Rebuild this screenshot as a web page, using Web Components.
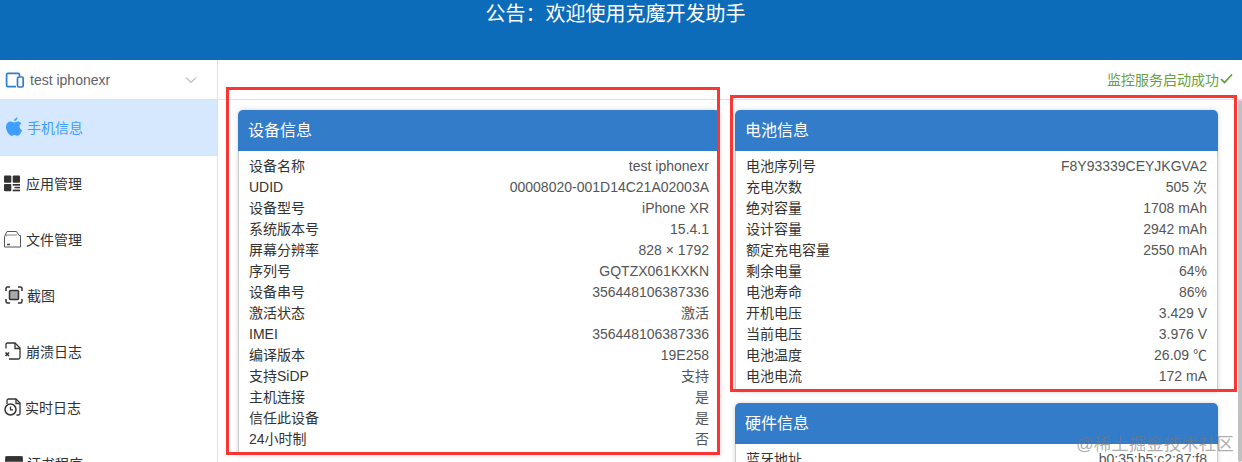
<!DOCTYPE html>
<html><head><meta charset="utf-8">
<style>
html,body{margin:0;padding:0;height:462px;overflow:hidden;background:#fff}
body{font:14px "Liberation Sans","Noto Sans CJK SC",sans-serif;color:#303133}
</style></head><body>
<app-shell></app-shell>
<script>
const icons={
 device:'<svg width="20" height="20" viewBox="0 0 20 20" fill="none" stroke="#2f7cc7" stroke-width="1.7"><path d="M14.500 6.500V4.800c0-.9-.6-1.400-1.400-1.400H3c-.9 0-1.400.6-1.400 1.400v10.400c0 .9.600 1.400 1.400 1.400h8"/><rect x="12.500" y="7" width="5.700" height="10" rx="1.300"/></svg>',
 apple:'<svg width="18" height="20" viewBox="0 0 18 20" fill="#409eff"><path d="M12.600 .500c.1 1.400-1.500 3.600-3.500 3.500C8.900 2.300 10.800 .600 12.600 .500zM9.100 5.500c1 0 2-.9 3.600-.9 1.200 0 2.700.6 3.600 2-2.700 1.600-2.200 5.500.7 6.600-.8 2.300-2.500 5.500-4.300 5.500-1.200 0-1.700-.8-3.200-.8s-2.100.8-3.200.8C4.500 18.700 1 13.900 1 10.100c0-3.400 2.300-5.500 4.500-5.500 1.500 0 2.700.9 3.600.9z"/></svg>',
 apps:'<svg width="18" height="18" viewBox="0 0 18 18" fill="#333"><rect x="1" y="1.500" width="7.300" height="7.300" rx="1"/><rect x="9.700" y="1.500" width="7.300" height="7.300" rx="1"/><rect x="1" y="10" width="7.300" height="7.300" rx="1"/><rect x="9.700" y="10" width="7.300" height="1.700"/><rect x="11.500" y="12.800" width="5.500" height="1.500"/><rect x="9.700" y="15.600" width="7.300" height="1.700"/></svg>',
 files:'<svg width="18" height="18" viewBox="0 0 18 18" fill="none" stroke="#555" stroke-width="1"><path d="M1.500 17V6.500L4 1.500h9.500l2.500 4h1.500V17z"/><path d="M3 6.500V5h11" stroke="#888"/><path d="M4 14.500h3" stroke-width="1.500" stroke="#444"/></svg>',
 shot:'<svg width="18" height="18" viewBox="0 0 18 18" fill="none" stroke="#333" stroke-width="1.500"><path d="M1 5V2.500C1 1.700 1.700 1 2.500 1H5M13 1h2.500c.8 0 1.500.7 1.500 1.500V5M17 13v2.500c0 .8-.7 1.500-1.500 1.500H13M5 17H2.500C1.700 17 1 16.300 1 15.500V13"/><rect x="4.500" y="4.500" width="9" height="9" rx="1" fill="#aaa"/></svg>',
 crash:'<svg width="18" height="18" viewBox="0 0 18 18" fill="none" stroke="#333" stroke-width="1.300"><path d="M2 6.500V2.500C2 1.700 2.700 1 3.500 1H11l5 5V15.500c0 .8-.7 1.500-1.500 1.500H5"/><path d="M11 1v5.500h5"/><path d="M1.500 10.500l3.500 3.500M5 10.500l-3.500 3.500" stroke-width="1.700"/></svg>',
 log:'<svg width="18" height="18" viewBox="0 0 18 18" fill="none" stroke="#333" stroke-width="1.300"><path d="M3 6V2.500C3 1.700 3.700 1 4.500 1H12l4 4V15.500c0 .8-.7 1.500-1.500 1.500h-2"/><path d="M12 1v4.500h4"/><circle cx="6.500" cy="11.500" r="5.500" fill="#fff" stroke-width="1.500"/><path d="M6.500 8.500v3.300h2.500"/></svg>',
 cert:'<svg width="18" height="18" viewBox="0 0 18 18" fill="none" stroke="#333" stroke-width="1.300"><rect x="1" y="3" width="16" height="15" rx="1.500"/><path d="M1 3h16v4H1z" fill="#333"/></svg>',
 chev:'<svg width="12" height="8" viewBox="0 0 12 8" fill="none" stroke="#909399" stroke-width="1"><path d="M1 1.500l5 5 5-5"/></svg>',
 check:'<svg width="13" height="11" viewBox="0 0 13 11" fill="none" stroke="#5c9a35" stroke-width="1.700"><path d="M1 6l3.500 3.500L12 1.500"/></svg>'
};
class TopBanner extends HTMLElement{constructor(){super();this.attachShadow({mode:'open'}).innerHTML=`<style>
:host{display:block;height:60px;box-sizing:border-box;background:#0c6cb9;color:#fff;font-size:20px;line-height:28px;text-align:center;padding-right:11px}
</style><slot></slot>`}}
customElements.define('top-banner',TopBanner);

class DeviceSelect extends HTMLElement{constructor(){super();this.attachShadow({mode:'open'}).innerHTML=`<style>
:host{display:flex;align-items:center;height:40px;box-sizing:border-box;border-bottom:1px solid #dcdfe6;padding:1px 20px 0 5px;color:#606266}
.i{display:flex;width:25px}.t{flex:1}
svg{display:block}
</style><span class="i">${icons.device}</span><span class="t"><slot></slot></span>${icons.chev}`}}
customElements.define('device-select',DeviceSelect);

class NavItem extends HTMLElement{constructor(){super();this.attachShadow({mode:'open'}).innerHTML=`<style>
:host{display:flex;align-items:center;height:56px;box-sizing:border-box;padding:0 0 2px var(--pl,4px);gap:var(--g,4px);color:#303133}
:host([active]){background:#d5e8fd;color:#409eff}
span{display:flex}
</style><span>${icons[this.getAttribute('icon')]}</span><slot></slot>`}}
customElements.define('nav-item',NavItem);

class SideBar extends HTMLElement{constructor(){super();this.attachShadow({mode:'open'}).innerHTML=`<style>
:host{display:block;width:218px;flex:none;box-sizing:border-box;border-right:1px solid #dcdfe6;overflow:hidden}
</style><slot></slot>`}}
customElements.define('side-bar',SideBar);

class InfoCard extends HTMLElement{constructor(){super();this.attachShadow({mode:'open'}).innerHTML=`<style>
:host{display:block;border-radius:5px 5px 0 0;box-shadow:0 0 5px rgba(0,0,0,.18);background:#fff}
.h{height:41px;box-sizing:border-box;background:#327cc9;color:#fff;font-size:16px;line-height:40px;padding:1px 10px 0;border-radius:5px 5px 0 0}
.b{border:1px solid #ccc;border-width:0 1px;padding:5px 10px 5px 10px}
</style><div class="h">${this.getAttribute('title')}</div><div class="b"><slot></slot></div>`}}
customElements.define('info-card',InfoCard);

class InfoRow extends HTMLElement{constructor(){super();this.attachShadow({mode:'open'}).innerHTML=`<style>
:host{display:flex;justify-content:space-between;height:21px;line-height:21px;color:#333;font-size:14px;white-space:nowrap}
.v{color:#555}
</style><span><slot></slot></span><span class="v">${this.getAttribute('v')}</span>`}}
customElements.define('info-row',InfoRow);

class RedBox extends HTMLElement{constructor(){super();this.attachShadow({mode:'open'}).innerHTML=`<style>
:host{display:block;position:absolute;box-sizing:border-box;border:3px solid #fb3434;pointer-events:none}
</style>`}}
customElements.define('red-box',RedBox);

class StatusBar extends HTMLElement{constructor(){super();this.attachShadow({mode:'open'}).innerHTML=`<style>
:host{display:flex;justify-content:flex-end;align-items:center;height:40px;flex:none;box-sizing:border-box;border-bottom:1px solid #e2e2e2;padding:0 9px 2px 0;color:#67a03c;gap:1px;font-size:14px}
svg{display:block}
</style><slot></slot>${icons.check}`}}
customElements.define('status-bar',StatusBar);

const dev=[['设备名称','test iphonexr'],['UDID','00008020-001D14C21A02003A'],['设备型号','iPhone XR'],['系统版本号','15.4.1'],['屏幕分辨率','828 × 1792'],['序列号','GQTZX061KXKN'],['设备串号','356448106387336'],['激活状态','激活'],['IMEI','356448106387336'],['编译版本','19E258'],['支持SiDP','支持'],['主机连接','是'],['信任此设备','是'],['24小时制','否']];
const bat=[['电池序列号','F8Y93339CEYJKGVA2'],['充电次数','505 次'],['绝对容量','1708 mAh'],['设计容量','2942 mAh'],['额定充电容量','2550 mAh'],['剩余电量','64%'],['电池寿命','86%'],['开机电压','3.429 V'],['当前电压','3.976 V'],['电池温度','26.09 ℃'],['电池电流','172 mA']];
const rows=a=>a.map(([k,v])=>`<info-row v="${v}">${k}</info-row>`).join('');

class AppShell extends HTMLElement{constructor(){super();this.attachShadow({mode:'open'}).innerHTML=`<style>
:host{display:flex;flex-direction:column;width:1242px;height:462px;overflow:hidden;position:relative}
.body{display:flex;flex:1;min-height:0}
.main{flex:1;display:flex;flex-direction:column;min-width:0}
.scroll{flex:1;display:flex;min-height:0}
.grid{flex:1;display:grid;grid-template-columns:482px 483px;column-gap:15px;padding:10px 0 0 20px;overflow:hidden;align-items:start}
.col{display:flex;flex-direction:column;gap:11px}
.bar{width:4px;background:#c1c1c1;flex:none;margin:0;border-radius:2px}
.wm{position:absolute;left:1076px;top:433px;font-size:17.500px;color:rgba(120,120,120,.6);white-space:nowrap;line-height:22px}
</style>
<top-banner>公告：欢迎使用克魔开发助手</top-banner>
<div class="body">
<side-bar>
<device-select>test iphonexr</device-select>
<nav-item icon="apple" active style="--pl:5px;--g:4px">手机信息</nav-item>
<nav-item icon="apps" style="--pl:3px;--g:5px">应用管理</nav-item>
<nav-item icon="files" style="--pl:3px;--g:5px">文件管理</nav-item>
<nav-item icon="shot" style="--pl:5px;--g:4px">截图</nav-item>
<nav-item icon="crash" style="--pl:4px;--g:4px">崩溃日志</nav-item>
<nav-item icon="log" style="--pl:4px;--g:3px">实时日志</nav-item>
<nav-item icon="cert" style="--pl:5px;--g:4px">证书程序</nav-item>
</side-bar>
<div class="main">
<status-bar>监控服务启动成功</status-bar>
<div class="scroll">
<div class="grid">
<div class="col"><info-card title="设备信息">${rows(dev)}</info-card></div>
<div class="col"><info-card title="电池信息">${rows(bat)}</info-card>
<info-card title="硬件信息"><info-row v="b0:35:b5:c2:87:f8">蓝牙地址</info-row></info-card></div>
</div>
<div class="bar"></div>
</div>
</div>
</div>
<red-box style="left:226px;top:87px;width:494px;height:368px"></red-box>
<red-box style="left:730px;top:95px;width:507px;height:297px"></red-box>
<div class="wm">@稀土掘金技术社区</div>`}}
customElements.define('app-shell',AppShell);
</script></body></html>
